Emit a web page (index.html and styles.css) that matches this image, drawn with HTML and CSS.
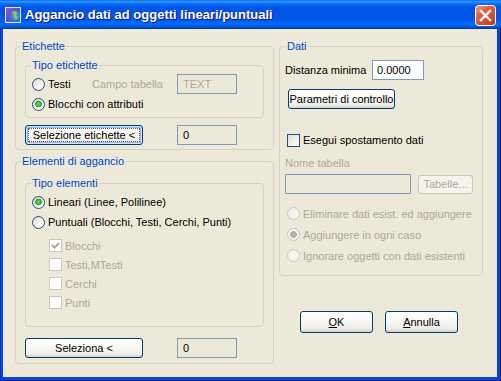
FILE: index.html
```html
<!DOCTYPE html>
<html lang="it">
<head>
    <meta charset="UTF-8">
    <title>Aggancio dati ad oggetti lineari/puntuali</title>
    <link rel="stylesheet" href="styles.css">
</head>
<body>
    <div class="window">
        <div class="titlebar">
            <svg class="title-icon" width="16" height="16" viewBox="0 0 16 16">
                <defs>
                    <linearGradient id="ig" x1="0" y1="0" x2="1" y2="1">
                        <stop offset="0" stop-color="#b04ad8"/>
                        <stop offset="0.5" stop-color="#5a4fd8"/>
                        <stop offset="1" stop-color="#1c7be8"/>
                    </linearGradient>
                </defs>
                <rect x="0.5" y="0.5" width="15" height="15" fill="url(#ig)" stroke="#e8e8ff"/>
                <circle cx="10" cy="8.5" r="5" fill="#2a8ce0"/>
                <path d="M7 5 L10 4 L12 6 L11 8 L13 10 L11 13 L9 11 L8 8 Z" fill="#8cc83c"/>
                <path d="M10 5 L12 6 L11 7 Z" fill="#e8d040"/>
            </svg>
            <span class="title-text">Aggancio dati ad oggetti lineari/puntuali</span>
            <svg class="close" width="21" height="21" viewBox="0 0 21 21">
                <defs>
                    <linearGradient id="cg" x1="0" y1="0" x2="1" y2="1">
                        <stop offset="0" stop-color="#f0a088"/>
                        <stop offset="0.35" stop-color="#e2603e"/>
                        <stop offset="1" stop-color="#c43a16"/>
                    </linearGradient>
                </defs>
                <rect x="0.5" y="0.5" width="20" height="20" rx="3" fill="url(#cg)" stroke="#ffffff"/>
                <path d="M6 6 L15 15 M15 6 L6 15" stroke="#ffffff" stroke-width="2.4" stroke-linecap="square"/>
            </svg>
        </div>

        <div class="client">
            <div class="col-left">
                <div class="group g-etichette">
                    <span class="group-title">Etichette</span>
                    <div class="group sub sub-etichette">
                        <span class="group-title">Tipo etichette</span>
                        <div class="row">
                            <label class="opt w-testi"><span class="radio"></span>Testi</label>
                            <span class="dim w-campo">Campo tabella</span>
                            <input class="field f-small" value="TEXT" disabled>
                        </div>
                        <div class="row">
                            <label class="opt"><span class="radio on"></span>Blocchi con attributi</label>
                        </div>
                    </div>
                    <div class="row btn-row">
                        <button class="btn focus w-sel">Selezione etichette &lt;</button>
                        <input class="field f-small ro" value="0" readonly>
                    </div>
                </div>

                <div class="group g-elementi">
                    <span class="group-title">Elementi di aggancio</span>
                    <div class="group sub sub-elementi">
                        <span class="group-title">Tipo elementi</span>
                        <div class="row">
                            <label class="opt"><span class="radio on"></span>Lineari (Linee, Polilinee)</label>
                        </div>
                        <div class="row">
                            <label class="opt"><span class="radio"></span>Puntuali (Blocchi, Testi, Cerchi, Punti)</label>
                        </div>
                        <div class="checks">
                            <label class="opt chk-row dim"><span class="check off on">
                                <svg width="11" height="11" viewBox="0 0 11 11"><path d="M2 5 L4.5 7.5 L9 3" fill="none" stroke="#aca899" stroke-width="2"/></svg>
                            </span>Blocchi</label>
                            <label class="opt chk-row dim"><span class="check off"></span>Testi,MTesti</label>
                            <label class="opt chk-row dim"><span class="check off"></span>Cerchi</label>
                            <label class="opt chk-row dim"><span class="check off"></span>Punti</label>
                        </div>
                    </div>
                    <div class="row btn-row2">
                        <button class="btn w-sel">Seleziona &lt;</button>
                        <input class="field f-small ro" value="0" readonly>
                    </div>
                </div>
            </div>

            <div class="col-right">
                <div class="group g-dati">
                    <span class="group-title">Dati</span>
                    <div class="row dist-row">
                        <span class="w-dist">Distanza minima</span>
                        <input class="field f-dist" value="0.0000">
                    </div>
                    <button class="btn btn-param">Parametri di controllo</button>
                    <div class="row esegui-row">
                        <label class="opt"><span class="check"></span>Esegui spostamento dati</label>
                    </div>
                    <div class="dim nome-label">Nome tabella</div>
                    <div class="row nome-row">
                        <input class="field f-nome ro" value="" disabled>
                        <button class="btn btn-off" disabled>Tabelle...</button>
                    </div>
                    <div class="radios-off">
                        <label class="opt r-off dim"><span class="radio off"></span>Eliminare dati esist. ed aggiungere</label>
                        <label class="opt r-off dim"><span class="radio off on"></span>Aggiungere in ogni caso</label>
                        <label class="opt r-off dim"><span class="radio off"></span>Ignorare oggetti con dati esistenti</label>
                    </div>
                </div>
                <div class="actions">
                    <button class="btn btn-act"><u>O</u>K</button>
                    <button class="btn btn-act"><u>A</u>nnulla</button>
                </div>
            </div>
        </div>
    </div>
</body>
</html>
```

FILE: styles.css
```css
body {
    margin: 0;
    font-family: "Liberation Sans", Arial, sans-serif;
    font-size: 11px;
    color: #000;
}
.window {
    width: 501px;
    height: 381px;
    display: flex;
    flex-direction: column;
    background: #0846d8;
    box-shadow: inset -1px 0 #001ea0, inset 0 -1px #001ea0, inset 1px 0 #0831d9;
}
.titlebar {
    height: 29px;
    flex: none;
    display: flex;
    align-items: center;
    padding: 0 5px;
    background: linear-gradient(to bottom, #0058ee 0%, #3593ff 4%, #288eff 7%, #127dff 10%, #036ffc 13%, #0262ee 18%, #0057e5 25%, #0054e3 35%, #0055eb 60%, #005bf5 70%, #026afe 80%, #0062ef 88%, #0052d6 94%, #0040ab 97%, #003092 100%);
}
.title-icon {
    flex: none;
    margin-top: 1px;
}
.title-text {
    flex: 1;
    margin-left: 4px;
    color: #fff;
    font-weight: bold;
    font-size: 13px;
    text-shadow: 1px 1px #0f1089;
}
.close {
    flex: none;
    margin-top: 1px;
}
.client {
    flex: 1;
    margin: 0 4px 4px 3px;
    background: #ece9d8;
    display: flex;
    gap: 5px;
    padding: 17px 0 0 12px;
    box-sizing: border-box;
}
.col-left {
    width: 259px;
}
.col-right {
    width: 204px;
}

/* group boxes */
.group {
    position: relative;
    border: 1px solid #d5d2c2;
    border-radius: 4px;
    box-sizing: border-box;
}
.group-title {
    position: absolute;
    top: -7px;
    left: 5px;
    padding: 0 1px;
    line-height: 13px;
    background: #ece9d8;
    color: #0046d5;
    white-space: nowrap;
}
.g-etichette {
    height: 104px;
    padding: 18px 0 0 9px;
}
.g-elementi {
    height: 203px;
    margin-top: 11px;
    padding: 21px 0 0 9px;
}
.sub {
    width: 239px;
    padding: 8px 0 0 6px;
}
.sub-etichette {
    height: 53px;
}
.sub-elementi {
    height: 144px;
}
.g-dati {
    height: 230px;
}
.g-dati .group-title {
    left: 6px;
}

/* rows and options */
.row {
    display: flex;
    align-items: center;
    height: 20px;
}
.opt {
    display: flex;
    align-items: center;
    gap: 3px;
    white-space: nowrap;
}
.dim {
    color: #aca899;
}
.w-testi {
    width: 60px;
}
.w-campo {
    width: 85px;
}
.checks {
    margin-top: 4px;
    padding-left: 17px;
}
.chk-row {
    height: 19px;
}
.btn-row {
    margin-top: 7px;
}
.btn-row2 {
    margin-top: 11px;
}
.btn-row .field,
.btn-row2 .field {
    margin-left: 34px;
}

/* radio buttons */
.radio {
    width: 13px;
    height: 13px;
    flex: none;
    box-sizing: border-box;
    border: 1px solid #1c5180;
    border-radius: 50%;
    background: linear-gradient(135deg, #dcd9c8, #f6f5f1 60%, #ffffff);
}
.radio.on {
    background: radial-gradient(circle at 50% 45%, #8ee58a 0, #35b531 2px, #21a121 3px, transparent 3.6px), linear-gradient(135deg, #dcd9c8, #f6f5f1 60%, #ffffff);
}
.radio.off {
    border-color: #cac8bb;
    background: #f4f3ee;
}
.radio.off.on {
    background: radial-gradient(circle, #c0bdb0 0, #aca899 3px, transparent 3.6px), #f4f3ee;
}

/* check boxes */
.check {
    width: 13px;
    height: 13px;
    flex: none;
    box-sizing: border-box;
    border: 1px solid #1c5180;
    background: linear-gradient(135deg, #dcdcd7, #ffffff);
    display: flex;
    align-items: center;
    justify-content: center;
}
.check.off {
    border-color: #cac8bb;
    background: #fff;
}

/* text fields */
.field {
    height: 20px;
    box-sizing: border-box;
    border: 1px solid #7f9db9;
    padding: 0 0 0 5px;
    font: inherit;
    color: #000;
    background: #fff;
    outline: none;
}
.field:disabled {
    color: #aca899;
    background: #ece9d8;
}
.field.ro {
    background: #ece9d8;
}
.f-small {
    width: 60px;
}
.f-dist {
    width: 52px;
    padding-left: 4px;
}
.f-nome {
    width: 126px;
}

/* buttons */
.btn {
    height: 20px;
    box-sizing: border-box;
    border: 1px solid #003c74;
    border-radius: 3px;
    padding: 0;
    font: inherit;
    color: #000;
    background: linear-gradient(to bottom, #ffffff, #f5f4ef 60%, #ecebe5 85%, #d6d0c5);
    white-space: nowrap;
}
.btn.focus {
    box-shadow: inset 0 0 0 1px #cee7ff, inset 0 0 0 2px #98b8ea;
    outline: 1px dotted #555;
    outline-offset: -4px;
}
.btn-off {
    width: 55px;
    height: 19px;
    margin-left: 7px;
    border-color: #c9c7ba;
    color: #aca899;
    background: #f5f4ea;
}
.w-sel {
    width: 118px;
}

/* Dati panel */
.dist-row {
    margin-top: 13px;
    padding-left: 5px;
}
.w-dist {
    width: 87px;
}
.btn-param {
    display: block;
    width: 107px;
    margin: 9px 0 0 8px;
}
.esegui-row {
    margin-top: 21px;
    padding-left: 7px;
}
.nome-label {
    margin-top: 7px;
    padding-left: 5px;
    line-height: 13px;
}
.nome-row {
    margin-top: 4px;
    padding-left: 5px;
}
.radios-off {
    margin-top: 9px;
    padding-left: 7px;
}
.r-off {
    height: 21px;
}
.actions {
    display: flex;
    gap: 12px;
    margin-top: 35px;
    padding-left: 21px;
}
.btn-act {
    width: 73px;
    height: 22px;
}
```
